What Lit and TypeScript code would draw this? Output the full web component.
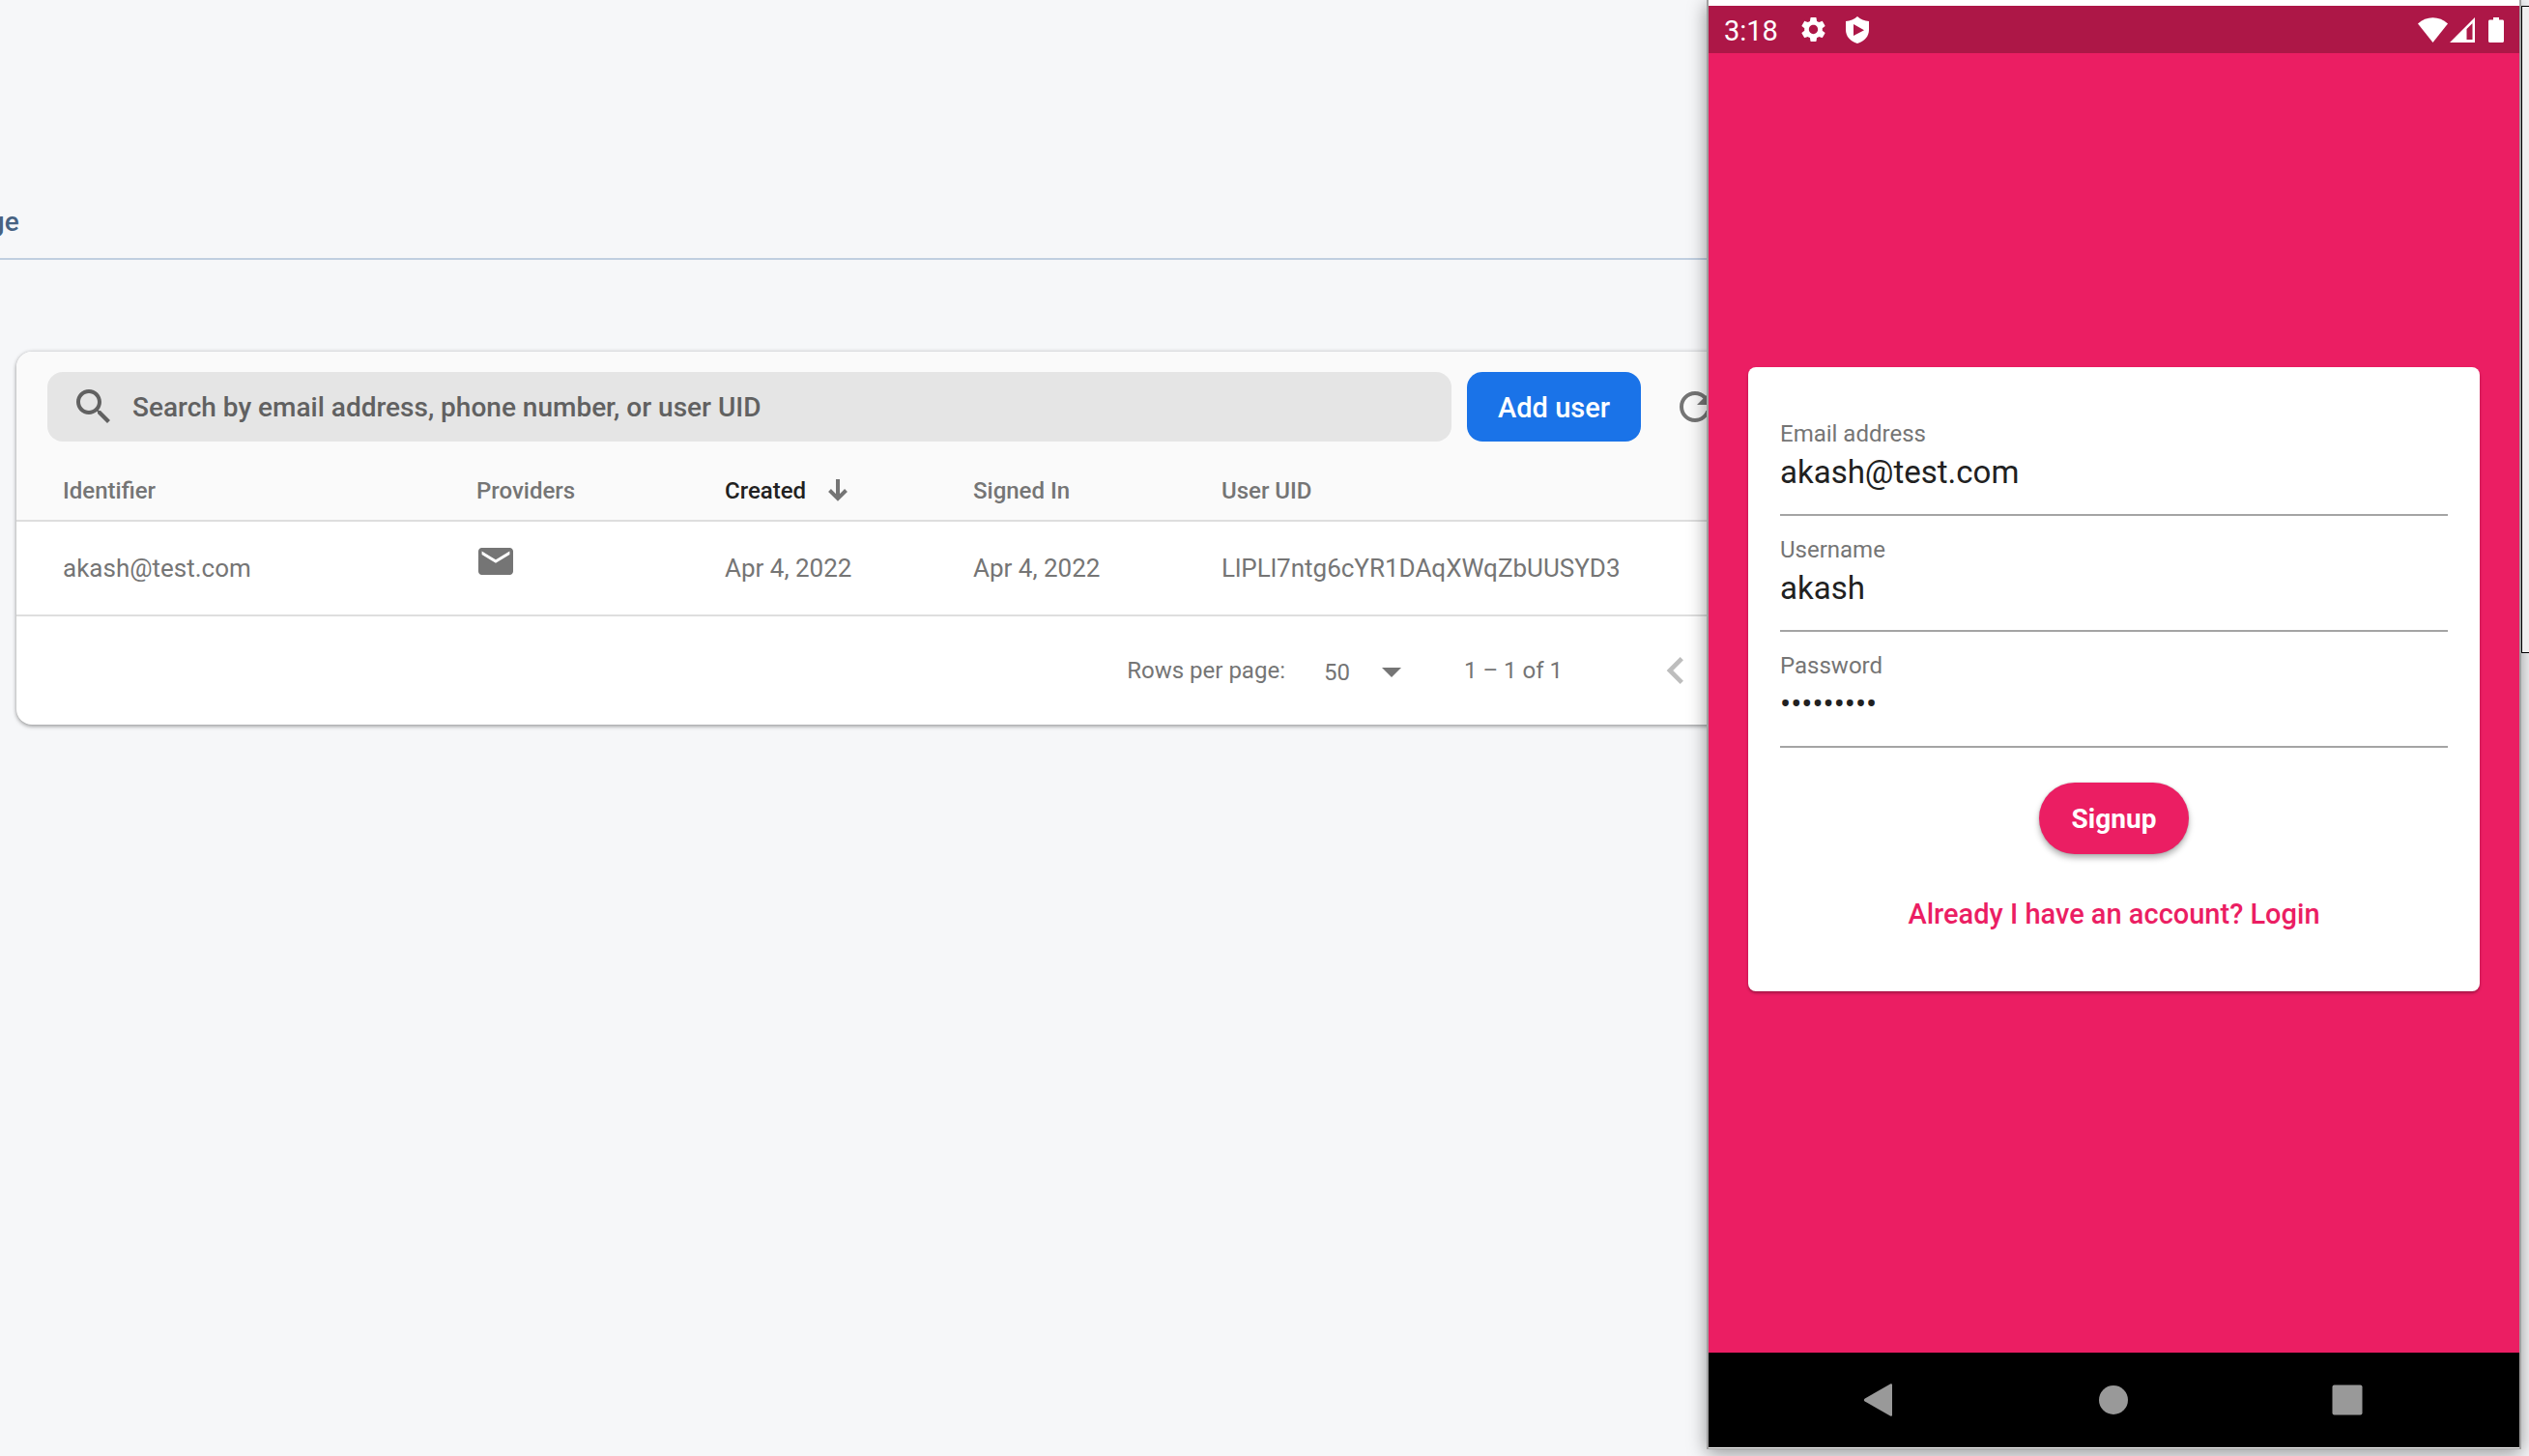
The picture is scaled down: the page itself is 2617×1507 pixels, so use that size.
import { LitElement, html, css, svg } from "lit";
import { customElement, property } from "lit/decorators.js";

interface UserRow {
  identifier: string;
  created: string;
  signedIn: string;
  uid: string;
}

@customElement("auth-console")
class AuthConsole extends LitElement {
  static styles = css`
    :host {
      display: block;
      font-family: Roboto, "Liberation Sans", sans-serif;
      color: #757575;
    }
    .tabs {
      display: flex;
      align-items: center;
      height: 74px;
      padding-top: 193px;
      border-bottom: 2px solid #c0cfe0;
      overflow: hidden;
    }
    .tab {
      color: #476282;
      font-size: 28px;
      line-height: 40px;
      font-weight: 500;
      text-decoration: none;
      margin-left: -59px;
    }
    .card {
      margin: 95px -60px 0 17px;
      background: #fff;
      border-radius: 16px;
      box-shadow: 0 2px 4px rgba(0, 0, 0, 0.3), 0 0 4px rgba(0, 0, 0, 0.16);
      overflow: hidden;
    }
    .toolbar {
      display: flex;
      align-items: center;
      gap: 16px;
      padding: 21px 48px 17px 32px;
      background: #fafafa;
    }
    .search {
      flex: 1;
      min-width: 0;
      display: flex;
      align-items: center;
      gap: 16px;
      height: 72px;
      box-sizing: border-box;
      padding: 0 24px;
      border-radius: 16px;
      background: #e5e5e5;
      color: #616161;
    }
    .search svg {
      width: 48px;
      height: 48px;
      flex: none;
    }
    input {
      flex: 1;
      min-width: 0;
      border: 0;
      padding: 2px 0 0;
      outline: 0;
      background: none;
      font: 500 28px/40px Roboto, "Liberation Sans", sans-serif;
      color: #616161;
    }
    input::placeholder {
      color: #616161;
      opacity: 1;
    }
    .add {
      height: 72px;
      padding: 2px 32px 0;
      border: 0;
      border-radius: 16px;
      background: #1a73e8;
      color: #fff;
      font: 500 29px/40px Roboto, "Liberation Sans", sans-serif;
    }
    .icon-button {
      display: flex;
      border: 0;
      padding: 0;
      background: none;
      color: #757575;
    }
    .refresh {
      margin-left: 16px;
    }
    .refresh svg {
      width: 48px;
      height: 48px;
    }
    .previous svg {
      width: 56px;
      height: 56px;
    }
    table {
      width: 100%;
      table-layout: fixed;
      border-collapse: separate;
      border-spacing: 0;
    }
    th,
    td {
      box-sizing: border-box;
      padding: 0 0 0 48px;
      text-align: left;
      border-bottom: 2px solid #dedede;
      white-space: nowrap;
    }
    th {
      height: 66px;
      padding-top: 3px;
      background: #fafafa;
      font-size: 24px;
      font-weight: 500;
    }
    td {
      height: 98px;
      font-size: 26px;
    }
    .wide {
      width: 428px;
    }
    .narrow {
      width: 257px;
    }
    .sorted {
      display: flex;
      align-items: center;
      gap: 23px;
      color: #212121;
    }
    .sorted svg {
      width: 20px;
      height: 23px;
      color: #757575;
    }
    .mail {
      display: block;
      width: 36px;
      height: 28px;
      margin: 0 0 14px 2px;
    }
    .pager {
      display: flex;
      align-items: center;
      justify-content: flex-end;
      height: 112px;
      padding-right: 64px;
      font-size: 24px;
    }
    .size {
      display: grid;
      align-items: center;
      width: 86px;
      margin: 3px 59px 0 40px;
    }
    .size > * {
      grid-area: 1 / 1;
    }
    .size svg {
      width: 48px;
      height: 48px;
      justify-self: end;
      margin: 0 -8px 2px 0;
      pointer-events: none;
    }
    select {
      appearance: none;
      border: 0;
      padding: 0;
      background: none;
      color: #757575;
      font: 400 24px/32px Roboto, "Liberation Sans", sans-serif;
    }
    .previous {
      margin-left: 89px;
      color: #bdbdbd;
    }
  `;

  @property({ attribute: false }) users: UserRow[] = [
    {
      identifier: "akash@test.com",
      created: "Apr 4, 2022",
      signedIn: "Apr 4, 2022",
      uid: "LlPLl7ntg6cYR1DAqXWqZbUUSYD3",
    },
  ];

  private icon(d: string) {
    return html`<svg viewBox="0 0 24 24" fill="currentColor" aria-hidden="true">${svg`<path d=${d} />`}</svg>`;
  }

  render() {
    return html`
      <nav class="tabs"><a class="tab" href="#usage">Usage</a></nav>
      <section class="card">
        <div class="toolbar">
          <div class="search">
            ${this.icon("M15.5 14h-.79l-.28-.27C15.41 12.59 16 11.11 16 9.5 16 5.91 13.09 3 9.5 3S3 5.91 3 9.5 5.91 16 9.5 16c1.61 0 3.09-.59 4.23-1.57l.27.28v.79l5 4.99L20.49 19l-4.99-5zm-6 0C7.01 14 5 11.99 5 9.5S7.01 5 9.5 5 14 7.01 14 9.5 11.99 14 9.5 14z")}
            <input type="text" aria-label="Search users" placeholder="Search by email address, phone number, or user UID" />
          </div>
          <button class="add">Add user</button>
          <button class="icon-button refresh" aria-label="Refresh">
            ${this.icon("M17.65 6.35C16.2 4.9 14.21 4 12 4c-4.42 0-7.99 3.58-7.99 8s3.57 8 7.99 8c3.73 0 6.84-2.55 7.73-6h-2.08c-.82 2.33-3.04 4-5.65 4-3.31 0-6-2.69-6-6s2.69-6 6-6c1.66 0 3.14.69 4.22 1.78L13 11h7V4l-2.35 2.35z")}
          </button>
        </div>
        <table>
          <thead>
            <tr>
              <th class="wide">Identifier</th>
              <th class="narrow">Providers</th>
              <th class="narrow">
                <span class="sorted">
                  Created
                  <svg viewBox="0 0 20 23" fill="none" stroke="currentColor" stroke-width="4" aria-hidden="true">
                    <path d="M10 0v19M1.500 11.500L10 20l8.500-8.500" />
                  </svg>
                </span>
              </th>
              <th class="narrow">Signed In</th>
              <th>User UID</th>
            </tr>
          </thead>
          <tbody>
            ${this.users.map(
              (u) => html`<tr>
                <td>${u.identifier}</td>
                <td>
                  <svg class="mail" viewBox="2 4 20 16" preserveAspectRatio="none" fill="currentColor" role="img" aria-label="Email">
                    <path d="M20 4H4c-1.1 0-1.99.9-1.99 2L2 18c0 1.1.9 2 2 2h16c1.1 0 2-.9 2-2V6c0-1.1-.9-2-2-2zm0 4l-8 5-8-5V6l8 5 8-5v2z" />
                  </svg>
                </td>
                <td>${u.created}</td>
                <td>${u.signedIn}</td>
                <td>${u.uid}</td>
              </tr>`
            )}
          </tbody>
        </table>
        <div class="pager">
          <label for="size">Rows per page:</label>
          <span class="size">
            <select id="size"><option>50</option></select>
            ${this.icon("M7 10l5 5 5-5z")}
          </span>
          <span>1 – 1 of 1</span>
          <button class="icon-button previous" aria-label="Previous page">
            ${this.icon("M15.41 7.41L14 6l-6 6 6 6 1.41-1.41L10.83 12z")}
          </button>
        </div>
      </section>
    `;
  }
}

@customElement("phone-window")
class PhoneWindow extends LitElement {
  static styles = css`
    :host {
      display: flex;
      flex-direction: column;
      box-sizing: border-box;
      padding: 6px 0 1px;
      border: solid #a0a0a0;
      border-width: 0 2px 1px;
      background: #fff;
      box-shadow: 0 4px 18px rgba(0, 0, 0, 0.4);
      font-family: Roboto, "Liberation Sans", sans-serif;
    }
    .status {
      display: flex;
      align-items: center;
      height: 49px;
      padding: 0 16px;
      background: #ad1747;
      color: #fff;
      font-size: 29px;
      line-height: 40px;
    }
    .status span {
      padding-top: 2px;
    }
    .status svg {
      fill: currentColor;
    }
    .gear {
      width: 31px;
      height: 31px;
      margin-left: 21px;
    }
    .shield {
      width: 24px;
      height: 28px;
      margin-left: 18px;
    }
    .wifi {
      width: 31px;
      height: 26px;
      margin-left: auto;
    }
    .signal {
      width: 26px;
      height: 26px;
      margin: 0 14px 0 2px;
    }
    .battery {
      width: 16px;
      height: 26px;
    }
    .screen {
      flex: 1;
      display: flex;
      align-items: center;
      padding: 0 41px 49px;
      background: #eb1e63;
    }
    form {
      flex: 1;
      display: flex;
      flex-direction: column;
      padding: 34px 33px 60px;
      border-radius: 8px;
      background: #fff;
      box-shadow: 0 2px 3px rgba(0, 0, 0, 0.3);
    }
    .field {
      display: flex;
      flex-direction: column;
      gap: 6px;
      padding: 21px 0 23px;
      border-bottom: 2px solid #a4a4a4;
    }
    label {
      font-size: 24px;
      line-height: 28px;
      color: #757575;
    }
    input {
      height: 40px;
      border: 0;
      padding: 0;
      outline: 0;
      background: none;
      font: 400 33px/40px Roboto, "Liberation Sans", sans-serif;
      color: #212121;
    }
    .signup {
      align-self: center;
      height: 74px;
      margin: 36px 0 42px;
      padding: 2px 34px 0;
      border: 0;
      border-radius: 37px;
      background: #eb1e63;
      color: #fff;
      box-shadow: 0 4px 6px rgba(0, 0, 0, 0.3), 0 0 2px rgba(0, 0, 0, 0.2);
      font: 700 28px/40px Roboto, "Liberation Sans", sans-serif;
    }
    .login {
      align-self: center;
      color: #eb1e63;
      font-size: 29px;
      line-height: 40px;
      font-weight: 500;
      text-decoration: none;
    }
    .nav {
      display: flex;
      align-items: center;
      justify-content: center;
      gap: 198px;
      height: 98px;
      padding-right: 2px;
      background: #000;
    }
    .nav button {
      display: flex;
      border: 0;
      padding: 0;
      background: none;
    }
    .nav svg {
      width: 44px;
      height: 44px;
      fill: #999;
    }
  `;

  render() {
    return html`
      <header class="status">
        <span>3:18</span>
        <svg class="gear" viewBox="0 0 24 24" aria-hidden="true">
          <path d="M19.14 12.94c.04-.3.06-.61.06-.94 0-.32-.02-.64-.07-.94l2.03-1.58c.18-.14.23-.41.12-.61l-1.92-3.32c-.12-.22-.37-.29-.59-.22l-2.39.96c-.5-.38-1.03-.7-1.62-.94l-.36-2.54c-.04-.24-.24-.41-.48-.41h-3.84c-.24 0-.43.17-.47.41l-.36 2.54c-.59.24-1.13.57-1.62.94l-2.39-.96c-.22-.08-.47 0-.59.22L2.74 8.87c-.12.21-.08.47.12.61l2.03 1.58c-.05.3-.09.63-.09.94s.02.64.07.94l-2.03 1.58c-.18.14-.23.41-.12.61l1.92 3.32c.12.22.37.29.59.22l2.39-.96c.5.38 1.03.7 1.62.94l.36 2.54c.05.24.24.41.48.41h3.84c.24 0 .44-.17.47-.41l.36-2.54c.59-.24 1.13-.56 1.62-.94l2.39.96c.22.08.47 0 .59-.22l1.92-3.32c.12-.22.07-.47-.12-.61l-2.01-1.58zM12 15.6c-1.98 0-3.6-1.62-3.6-3.6s1.62-3.6 3.6-3.6 3.6 1.62 3.6 3.6-1.62 3.6-3.6 3.6z" />
        </svg>
        <svg class="shield" viewBox="0 0 24 28" aria-hidden="true">
          <path fill-rule="evenodd" d="M12 0C9 3 4.500 4.500 0 5v9c0 6.500 4.500 11.500 12 14 7.500-2.500 12-7.500 12-14V5C19.500 4.500 15 3 12 0zM8 8l11 6.200L8 20z" />
        </svg>
        <svg class="wifi" viewBox="0 0 31 26" aria-hidden="true"><path d="M0 6.500C9-2 22-2 31 6.500L15.500 26z" /></svg>
        <svg class="signal" viewBox="0 0 26 26" aria-hidden="true">
          <path fill-rule="evenodd" d="M26 0v26H0zM24 5.500L17.500 12v11H23.500V5.500z" />
        </svg>
        <svg class="battery" viewBox="0 0 16 26" aria-hidden="true">
          <path d="M5 0h6v2.500h3.500c.8 0 1.500.7 1.500 1.500v20.500c0 .8-.7 1.500-1.500 1.500h-13C.7 26 0 25.300 0 24.500V4c0-.8.7-1.500 1.500-1.500H5z" />
        </svg>
      </header>
      <main class="screen">
        <form @submit=${(e: Event) => e.preventDefault()}>
          <div class="field">
            <label for="email">Email address</label>
            <input id="email" type="email" value="akash@test.com" />
          </div>
          <div class="field">
            <label for="username">Username</label>
            <input id="username" type="text" value="akash" />
          </div>
          <div class="field">
            <label for="password">Password</label>
            <input id="password" type="password" value="•••••••••" />
          </div>
          <button class="signup">Signup</button>
          <a class="login" href="#login">Already I have an account? Login</a>
        </form>
      </main>
      <nav class="nav">
        <button aria-label="Back">
          <svg viewBox="0 0 44 44"><path d="M6.800 20.400L33 5.600c1.200-.6 2 0 2 1v31c0 1-.8 1.600-2 1L6.800 23.600c-1.300-.8-1.300-2.400 0-3.200z" /></svg>
        </button>
        <button aria-label="Home">
          <svg viewBox="0 0 44 44"><circle cx="22" cy="22" r="15" /></svg>
        </button>
        <button aria-label="Overview">
          <svg viewBox="0 0 44 44"><rect x="6.500" y="6.500" width="31" height="31" rx="2" /></svg>
        </button>
      </nav>
    `;
  }
}

@customElement("app-root")
class AppRoot extends LitElement {
  static styles = css`
    :host {
      display: flex;
      align-items: flex-start;
      min-height: 100vh;
      overflow: hidden;
      background: #f6f7f9;
    }
    .console {
      flex: 1;
      min-width: 0;
    }
    .phone {
      flex: 0 0 843px;
      min-height: calc(100vh - 7px);
      z-index: 1;
    }
    .edge {
      flex: 0 0 8px;
      box-sizing: border-box;
      height: 670px;
      margin-top: 6px;
      border: 1px solid #000;
      border-right: 0;
      background: #f0f0f0;
      z-index: 2;
    }
  `;

  render() {
    return html`
      <auth-console class="console"></auth-console>
      <phone-window class="phone"></phone-window>
      <div class="edge"></div>
    `;
  }
}
